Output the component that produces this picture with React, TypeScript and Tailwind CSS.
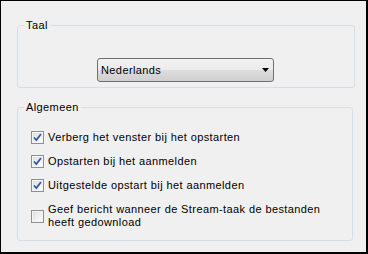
const OPTIONS = [
  { label: "Verberg het venster bij het opstarten", checked: true },
  { label: "Opstarten bij het aanmelden", checked: true },
  { label: "Uitgestelde opstart bij het aanmelden", checked: true },
  { label: "Geef bericht wanneer de Stream-taak de bestanden heeft gedownload", checked: false },
];

function Checkbox({ checked }: { checked: boolean }) {
  return (
    <span className="shrink-0 w-[13px] h-[13px] border border-[#8e8f8f] bg-[linear-gradient(135deg,#dcdcdc,#ffffff)] flex items-center justify-center">
      <span className="w-[11px] h-[11px] border border-[#f4f4f4] flex items-center justify-center">
        {checked && (
          <svg width="9" height="9" viewBox="0 0 9 9">
            <path d="M1 4.5 L3.3 7 L8 1" fill="none" stroke="#2f58b0" strokeWidth="1.8" />
          </svg>
        )}
      </span>
    </span>
  );
}

export default function App() {
  return (
    <div className="w-[368px] h-[254px] bg-[#f0f0f0] border-l border-t border-r-2 border-b-2 border-black text-[11px] leading-[13px] tracking-[0.4px] text-black font-['Liberation_Sans',Arial,sans-serif]">
      <fieldset className="ml-4 mt-[18px] w-[338px] h-[69px] m-0 p-0 border border-[#d5dfe5] rounded-[3px]">
        <legend className="ml-[6px] px-[2px]">Taal</legend>
        <div className="mt-[26px] ml-[79px] w-[177px] h-[24px] border border-[#707070] rounded-[3px] bg-[linear-gradient(#f2f2f2_0%,#ebebeb_50%,#dddddd_50%,#cfcfcf_100%)] flex items-center justify-between pl-[3px] pr-[4px]">
          <span>Nederlands</span>
          <svg width="7" height="4" viewBox="0 0 7 4">
            <path d="M0 0 H7 L3.5 4 Z" fill="#000" />
          </svg>
        </div>
      </fieldset>
      <fieldset className="ml-4 mt-[13px] w-[336px] h-[140px] m-0 p-0 border border-[#d5dfe5] rounded-[3px]">
        <legend className="ml-[6px] px-[2px]">Algemeen</legend>
        <div className="mt-[17px] ml-[13px] flex flex-col gap-[11px]">
          {OPTIONS.map((o) => (
            <div key={o.label} className="flex items-center gap-[4px]">
              <Checkbox checked={o.checked} />
              <span className="w-[290px]">{o.label}</span>
            </div>
          ))}
        </div>
      </fieldset>
    </div>
  );
}
